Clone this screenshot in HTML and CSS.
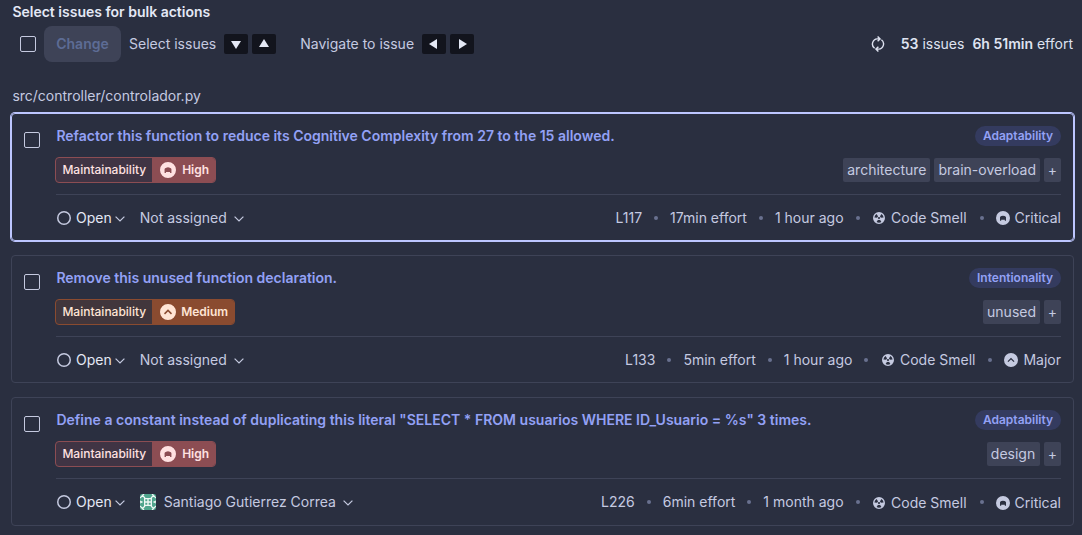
FILE: index.html
```html
<!DOCTYPE html>
<html lang="en">
<head>
<meta charset="utf-8">
<title>Issues</title>
<link rel="stylesheet" href="styles.css">
</head>
<body>
<svg class="sprite" aria-hidden="true">
  <symbol id="chevron" viewBox="0 0 10 6"><path d="M.6.6 5 5 9.4.6" fill="none" stroke="currentColor" stroke-width="1.2"/></symbol>
  <symbol id="smell" viewBox="0 0 12 12"><path fill="currentColor" fill-rule="evenodd" d="M6 0a6 6 0 1 0 0 12A6 6 0 0 0 6 0ZM6 4.9a1.1 1.1 0 1 1 0 2.2 1.1 1.1 0 0 1 0-2.2ZM1.4 5.6a4.7 4.7 0 0 1 2.2-3.5l1.5 2.4A2 2 0 0 0 4.2 5.8ZM10.6 5.6a4.7 4.7 0 0 0-2.2-3.5L6.9 4.5A2 2 0 0 1 7.8 5.8ZM3.6 10a4.7 4.7 0 0 0 4.8 0L7 7.7a2.2 2.2 0 0 1-2 0Z"/></symbol>
  <symbol id="critical" viewBox="0 0 14 14"><path fill="currentColor" fill-rule="evenodd" d="M7 0a7 7 0 1 0 0 14A7 7 0 0 0 7 0ZM4 9.7V6.2Q4.3 5.4 5.4 5.1Q7 4.3 8.6 5.1Q9.7 5.4 10 6.2V9.7H8.8V8.7H5.2v1Z"/></symbol>
  <symbol id="major" viewBox="0 0 14 14"><path fill="currentColor" fill-rule="evenodd" d="M7 0a7 7 0 1 0 0 14A7 7 0 0 0 7 0ZM4.4 9.1 3.5 8.2 7 4.7l3.5 3.5-.9.9L7 6.5Z"/></symbol>
</svg>

<h2 class="heading">Select issues for bulk actions</h2>
<div class="toolbar">
  <span class="checkbox"></span>
  <button class="change" disabled>Change</button>
  <span class="hint">Select issues</span>
  <span class="keys">
    <kbd class="key"><svg width="10" height="8" viewBox="0 0 10 8"><path d="M0 0h10L5 8Z"/></svg></kbd>
    <kbd class="key up"><svg width="10" height="8" viewBox="0 0 10 8"><path d="M0 8h10L5 0Z"/></svg></kbd>
  </span>
  <span class="hint navigate">Navigate to issue</span>
  <span class="keys">
    <kbd class="key"><svg width="8" height="10" viewBox="0 0 8 10"><path d="M8 0v10L0 5Z"/></svg></kbd>
    <kbd class="key"><svg width="8" height="10" viewBox="0 0 8 10"><path d="M0 0v10L8 5Z"/></svg></kbd>
  </span>
  <div class="totals">
    <svg class="reload" width="14" height="16" viewBox="0 0 14 16"><path d="M3.6 12.3A5.2 5.2 0 0 1 6.3 2.9H9M6.6.5 9.1 2.9 6.6 5.3M10.4 3.7A5.2 5.2 0 0 1 7.7 13.1H5M7.4 10.7 4.9 13.1 7.4 15.5" fill="none" stroke="currentColor" stroke-width="1.4"/></svg>
    <span><b>53</b> issues</span>
    <span><b>6h 51min</b> effort</span>
  </div>
</div>

<div class="path">src/controller/controlador.py</div>

<div class="list">
  <article class="card selected">
    <span class="checkbox"></span>
    <div class="content">
      <div class="row title-row"><a class="title">Refactor this function to reduce its Cognitive Complexity from 27 to the 15 allowed.</a><span class="pill">Adaptability</span></div>
      <div class="row tag-row">
        <div class="badge high"><span class="quality">Maintainability</span><span class="severity"><svg class="sev"><use href="#critical"/></svg>High</span></div>
        <div class="tags"><span class="tag">architecture</span><span class="tag">brain-overload</span><span class="tag plus">+</span></div>
      </div>
      <div class="row foot">
        <div class="state"><span class="ring"></span><span class="status">Open</span><svg class="chev"><use href="#chevron"/></svg></div>
        <div class="assignee">Not assigned<svg class="chev"><use href="#chevron"/></svg></div>
        <div class="meta"><span>L117</span><i class="dot"></i><span>17min effort</span><i class="dot"></i><span>1 hour ago</span><i class="dot"></i><span class="kind"><svg class="smell"><use href="#smell"/></svg>Code Smell</span><i class="dot"></i><span class="level"><svg class="lev"><use href="#critical"/></svg>Critical</span></div>
      </div>
    </div>
  </article>

  <article class="card">
    <span class="checkbox"></span>
    <div class="content">
      <div class="row title-row"><a class="title">Remove this unused function declaration.</a><span class="pill">Intentionality</span></div>
      <div class="row tag-row">
        <div class="badge medium"><span class="quality">Maintainability</span><span class="severity"><svg class="sev"><use href="#major"/></svg>Medium</span></div>
        <div class="tags"><span class="tag">unused</span><span class="tag plus">+</span></div>
      </div>
      <div class="row foot">
        <div class="state"><span class="ring"></span><span class="status">Open</span><svg class="chev"><use href="#chevron"/></svg></div>
        <div class="assignee">Not assigned<svg class="chev"><use href="#chevron"/></svg></div>
        <div class="meta"><span>L133</span><i class="dot"></i><span>5min effort</span><i class="dot"></i><span>1 hour ago</span><i class="dot"></i><span class="kind"><svg class="smell"><use href="#smell"/></svg>Code Smell</span><i class="dot"></i><span class="level"><svg class="lev"><use href="#major"/></svg>Major</span></div>
      </div>
    </div>
  </article>

  <article class="card assigned">
    <span class="checkbox"></span>
    <div class="content">
      <div class="row title-row"><a class="title wide">Define a constant instead of duplicating this literal "SELECT * FROM usuarios WHERE ID_Usuario = %s" 3 times.</a><span class="pill">Adaptability</span></div>
      <div class="row tag-row">
        <div class="badge high"><span class="quality">Maintainability</span><span class="severity"><svg class="sev"><use href="#critical"/></svg>High</span></div>
        <div class="tags"><span class="tag design">design</span><span class="tag plus">+</span></div>
      </div>
      <div class="row foot">
        <div class="state"><span class="ring"></span><span class="status">Open</span><svg class="chev"><use href="#chevron"/></svg></div>
        <div class="assignee"><svg class="avatar" viewBox="0 0 16 16"><rect width="16" height="16" fill="#4fa58d"/><path fill="none" stroke="#edf7f4" stroke-width="1.2" d="M0 4 4 0M12 0l4 4M0 12l4 4M16 12l-4 4M2 1l3 3M14 1l-3 3M2 15l3-3M14 15l-3-3M0 7l2 1-2 1M16 7l-2 1 2 1"/><path fill="#edf7f4" d="M4 4h8v8H4Z"/><path fill="#4fa58d" d="M5.3 5.3h2v2h-2ZM8.7 5.3h2v2h-2ZM5.3 8.7h2v2h-2ZM8.7 8.7h2v2h-2Z"/></svg>Santiago Gutierrez Correa<svg class="chev"><use href="#chevron"/></svg></div>
        <div class="meta"><span>L226</span><i class="dot"></i><span>6min effort</span><i class="dot"></i><span>1 month ago</span><i class="dot"></i><span class="kind"><svg class="smell"><use href="#smell"/></svg>Code Smell</span><i class="dot"></i><span class="level"><svg class="lev"><use href="#critical"/></svg>Critical</span></div>
      </div>
    </div>
  </article>
</div>
</body>
</html>
```
FILE: styles.css
```css
* { box-sizing: border-box; }
body {
  margin: 0;
  height: 535px;
  overflow: hidden;
  padding: 2px 9px 0 11px;
  background: #2a2f40;
  color: #c5cae0;
  font: 400 14px/20px Inter, sans-serif;
}
svg { display: block; flex: none; }
.sprite { display: none; }
.heading { margin: 0 0 0 1.4px; font-size: 14px; line-height: 20px; font-weight: 600; color: #e4e8f5; }
.toolbar { display: flex; align-items: center; height: 36px; margin-top: 4px; padding-left: 9px; }
.checkbox { flex: none; width: 16px; height: 16px; border: 1px solid #c5cae0; border-radius: 2px; }
.change {
  width: 77px; height: 36px; margin: 0 8px; padding: 0;
  border: 0; border-radius: 8px;
  background: #3e4357; color: #5d6c95;
  font: 600 14px/20px Inter, sans-serif;
}
.keys { display: flex; gap: 4px; margin-left: 8px; }
.key { display: flex; align-items: center; justify-content: center; width: 24px; height: 20px; padding-top: 1px; border-radius: 2px; background: #12141d; }
.key.up { padding: 0 0 2px; }
.navigate + .keys .key { padding: 0 2px 0 0; }
.navigate + .keys .key + .key { padding: 0 0 0 1px; }
.key path { fill: #e4e8f5; }
.navigate { margin-left: 24px; }
.totals { display: flex; align-items: center; gap: 8px; margin-left: auto; color: #dfe3f1; }
.totals b { font-weight: 600; }
.reload { margin-right: 8px; }
.path { margin: 24px 0 0 1.4px; }
.list { display: flex; flex-direction: column; gap: 14px; width: 1063px; margin-top: 7px; }
.card {
  display: flex; height: 128px; padding: 12px;
  border: 1px solid #3e4357; border-radius: 4px;
}
.card.selected { border-color: #bdc6ff; box-shadow: 0 0 0 1px #bdc6ff; }
.card.assigned { height: 129px; }
.card .checkbox { margin-top: 6px; }
.content { flex: 1; margin-left: 16px; }
.row { display: flex; align-items: center; }
.title-row { justify-content: space-between; height: 20px; }
.title { margin-left: .4px; font-weight: 600; color: #93a1f5; }
.title.wide { letter-spacing: .015px; }
.pill { padding: 0 8px; border-radius: 10px; background: #343b5f; color: #93a1f5; font-size: 12px; font-weight: 600; }
.tag-row { justify-content: space-between; height: 26px; margin-top: 11px; }
.badge { display: flex; height: 26px; margin-left: -1px; border: 1px solid; border-radius: 4px; font-size: 12px; line-height: 24px; overflow: hidden; }
.quality { padding: 0 6px 0 6.4px; font-weight: 500; }
.severity { display: flex; align-items: center; gap: 5px; padding: 0 6px 0 8px; font-weight: 600; }
.sev { width: 16px; height: 16px; }
.high { border-color: #8c4d53; background: #403444; color: #ffe1e1; }
.high .severity { gap: 6px; background: #8c4d53; }
.medium { border-color: #8a4b30; background: #41363c; color: #ffe5d5; }
.medium .severity { background: #8a4b30; }
.tags { display: flex; gap: 4px; }
.tag { height: 24px; padding: 0 4px; border-radius: 2px; background: #3e4357; line-height: 24px; }
.tag.design { padding-right: 4.8px; }
.tag.plus { width: 17px; padding: 0; text-align: center; }
.foot { height: 47px; margin-top: 11px; border-top: 1px solid #3e4357; }
.state, .assignee, .kind, .level { display: flex; align-items: center; }
.ring { width: 14px; height: 14px; margin: 0 5px 0 1px; border-radius: 50%; box-shadow: inset 0 0 0 1.5px #c5cae0; }
.status { color: #e4e8f5; }
.chev { width: 10px; height: 6px; margin: 1px 0 0 3px; }
.assignee { margin-left: 15px; }
.assignee .chev { margin-left: 7px; }
.avatar { width: 16px; height: 16px; margin-right: 8px; border-radius: 2px; }
.meta { display: flex; align-items: center; gap: 12px; margin-left: auto; }
.dot { width: 4px; height: 4px; border-radius: 50%; background: #69718f; }
.kind { gap: 6px; margin: 0 1px 0 0; }
.kind { margin-left: 1.5px; }
.smell { width: 12px; height: 12px; }
.level { gap: 5px; }
.lev { width: 14px; height: 14px; }
.assigned .kind, .assigned .level { position: relative; top: 1px; }
```
